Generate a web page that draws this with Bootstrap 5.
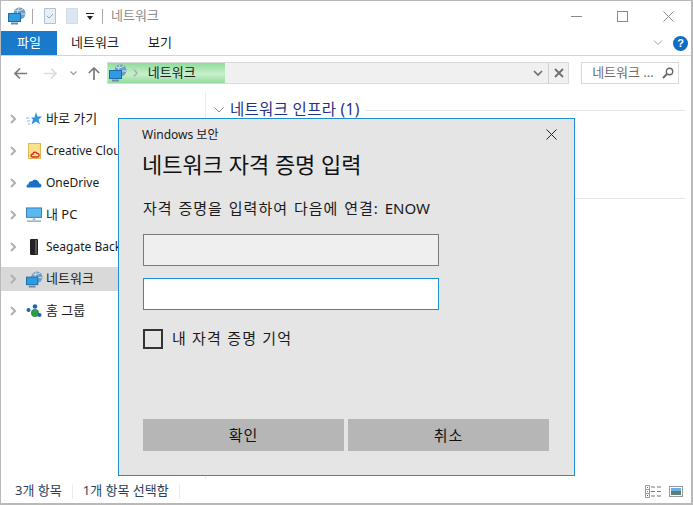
<!DOCTYPE html>
<html lang="ko">
<head>
    <meta charset="UTF-8">
    <meta name="viewport" content="width=device-width, initial-scale=1.0">
    <title>네트워크</title>
    <link href="https://cdn.jsdelivr.net/npm/bootstrap@5.3.0/dist/css/bootstrap.min.css" rel="stylesheet">
    <style>
        html, body { height: 505px; overflow: hidden; }
        body { font-family: "Noto Sans", "Noto Sans CJK KR", sans-serif; font-size: 13px; color: #1a1a1a; background: #fff; }
        .lat { font-size: 12px; }
        .explorer { width: 693px; height: 505px; border: 1px solid #b9b9b9; border-bottom-width: 2px; border-right-width: 2px; position: relative; }
        .title-row { height: 30px; padding-left: 7px; }
        .title-text { color: #8c8c8c; margin-left: 8px; margin-bottom: 2px; line-height: 1; }
        .vsep { width: 1px; height: 15px; background: #a8a8a8; }
        .qa-sep1 { margin-left: 6px; }
        .qa-doc1 { margin-left: 11px; }
        .qa-doc2 { margin-left: 10px; }
        .qa-drop { margin-left: 8px; }
        .qa-sep2 { margin-left: 8px; }
        .win-btns { margin-left: auto; }
        .win-btn { width: 46px; height: 30px; display: flex; align-items: center; justify-content: center; }
        .tab-row { height: 25px; border-bottom: 1px solid #d4d4d4; }
        .ftab { height: 24px; display: flex; align-items: center; justify-content: center; }
        .ftab-file { width: 56px; background: #1979ca; color: #fff; }
        .ftab-net { width: 76px; }
        .ftab-view { width: 54px; }
        .tab-tools { margin-left: auto; padding-right: 3px; gap: 10px; }
        .help-dot { width: 15px; height: 15px; border-radius: 50%; background: #0f6dc4; color: #fff; font-size: 11px; font-weight: 700; line-height: 15px; text-align: center; font-family: "Liberation Sans", sans-serif; }
        .addr-row { height: 35px; padding: 6px 12px 0 11px; }
        .nav-arrows { width: 95px; }
        .nav-slot { height: 22px; display: flex; align-items: center; justify-content: center; }
        .nav-back { width: 16px; }
        .nav-fwd { width: 16px; margin-left: 14px; }
        .nav-drop { width: 12px; margin-left: 9px; }
        .nav-up { width: 16px; margin-left: 7px; }
        .addr-box { width: 463px; height: 22px; background: #f0f0f0; border: 1px solid #d9d9d9; position: relative; }
        .addr-fill { width: 117px; height: 20px; background: linear-gradient(180deg, #8fdb9a 0%, #c8efcd 55%, #93dca0 100%); gap: 6px; padding-left: 1px; }
        .addr-label { margin-left: 4px; }
        .addr-end { margin-left: auto; }
        .addr-btn { width: 20px; height: 20px; display: flex; align-items: center; justify-content: center; }
        .addr-x { border-left: 1px solid #d0d0d0; }
        .search-field { width: 98px; height: 22px; margin-left: 12px; border: 1px solid #d9d9d9; color: #6d6d6d; padding: 0 4px 0 10px; white-space: nowrap; }
        .body-row { height: 388px; }
        .side-pane { width: 205px; padding-top: 16px; gap: 8px; border-right: 1px solid #ececec; }
        .side-item { height: 24px; padding-left: 9px; white-space: nowrap; }
        .side-item.is-active { background: #d9d9d9; }
        .side-icon { width: 24px; height: 20px; margin-left: 6px; display: flex; align-items: center; justify-content: center; }
        .main-pane { flex: 1; padding: 9px 6px 0 8px; }
        .sect-head { font-size: 15px; line-height: 18px; gap: 6px; white-space: nowrap; }
        .sect-name { color: #1e3287; font-size: 15.5px; letter-spacing: .3px; margin-bottom: 2px; }
        .sect-line { flex: 1; height: 1px; background: #e3e3e3; }
        .sect-rule { height: 1px; background: #e3e3e3; margin-top: 78px; }
        .status-row { height: 24px; padding-left: 14px; padding-right: 8px; gap: 10px; color: #2d3f57; }
        .status-sep { width: 1px; height: 15px; background: #ececec; }
        .status-icons { margin-left: auto; gap: 7px; }
        .cred-dialog { position: absolute; left: 117px; top: 117px; width: 457px; height: 358px; background: #e5e5e5; border: 1px solid #1f8fd0; padding: 0 23px; }
        .cred-close { position: absolute; right: 17px; top: 10px; line-height: 0; }
        .cred-app { padding-top: 8px; line-height: 16px; font-size: 12px; }
        .cred-title { font-size: 22px; line-height: 28px; font-weight: 400; margin: 7px 0 0; color: #111; }
        .cred-msg { font-size: 15px; line-height: 20px; letter-spacing: 1px; word-spacing: 1px; margin: 20px 0 0 1px; }
        .cred-msg-host { letter-spacing: 0; font-size: 15px; }
        .cred-input { width: 296px; height: 32px; margin-left: 1px; border-radius: 0; padding: 0 6px; }
        .cred-input.is-off { background: #efefef; border: 1px solid #7a7a7a; margin-top: 16px; }
        .cred-input.is-on { background: #fff; border: 1px solid #1f8fd0; margin-top: 12px; box-shadow: none; }
        .cred-check { margin: 18px 0 0 1px; gap: 9px; font-size: 15px; line-height: 20px; letter-spacing: 1.2px; }
        .cred-label { margin-bottom: 2px; }
        .cred-box { width: 20px; height: 20px; border: 2px solid #333; }
        .cred-actions { position: absolute; left: 24px; top: 300px; gap: 4px; }
        .cred-btn { width: 201px; height: 32px; background: #b6b6b6; border: 0; border-radius: 0; font-size: 15px; letter-spacing: 1px; color: #111; padding: 0; }
    </style>
</head>
<body>
    <svg width="0" height="0" class="position-absolute">
        <defs>
            <symbol id="ico-net" viewBox="0 0 18 18">
                <circle cx="11.5" cy="6.5" r="6" fill="#6f9fc4"/>
                <path d="M7 3c2 1 5 1 8-1M6 7h11M11 1c-2 3-2 7 0 11" stroke="#d5e6f2" stroke-width="1" fill="none"/>
                <rect x="0.5" y="6.5" width="12" height="8" fill="#2f9be0" stroke="#1a6da8"/>
                <path d="M3 16.5h7" stroke="#6e8aa0" stroke-width="2"/>
            </symbol>
            <symbol id="ico-chev" viewBox="0 0 6 10">
                <path d="M1 1l4 4-4 4" fill="none" stroke="#b0b0b0" stroke-width="2"/>
            </symbol>
        </defs>
    </svg>

    <div class="explorer d-flex flex-column">
        <!-- 제목 표시줄 -->
        <div class="title-row d-flex align-items-center">
            <svg width="18" height="18"><use href="#ico-net"/></svg>
            <span class="vsep qa-sep1"></span>
            <svg width="12" height="16" class="qa-doc1" viewBox="0 0 12 16"><path d="M.5.5h11v15H.5z" fill="#e9eef6" stroke="#b4c0d4"/><path d="M3 8l2 2 4-4" fill="none" stroke="#9aa4b4"/></svg>
            <svg width="12" height="16" class="qa-doc2" viewBox="0 0 12 16"><path d="M.5.5h11v15H.5z" fill="#dfe6f3" stroke="#d3dbe9"/></svg>
            <svg width="8" height="7" viewBox="0 0 8 7" class="qa-drop"><path d="M0 0h8v1H0zM1 3h6L4 7z" fill="#222"/></svg>
            <span class="vsep qa-sep2"></span>
            <span class="title-text">네트워크</span>
            <div class="win-btns d-flex">
                <div class="win-btn"><svg width="11" height="11"><path d="M0 5.5h11" stroke="#8a8a8a"/></svg></div>
                <div class="win-btn"><svg width="11" height="11"><rect x=".5" y=".5" width="10" height="10" fill="none" stroke="#8a8a8a"/></svg></div>
                <div class="win-btn"><svg width="11" height="11"><path d="M.5.5l10 10M10.5.5l-10 10" stroke="#8a8a8a"/></svg></div>
            </div>
        </div>

        <!-- 리본 탭 -->
        <div class="tab-row d-flex">
            <div class="ftab ftab-file">파일</div>
            <div class="ftab ftab-net">네트워크</div>
            <div class="ftab ftab-view">보기</div>
            <div class="tab-tools d-flex align-items-center">
                <svg width="10" height="6" viewBox="0 0 10 6"><path d="M1 .5l4 4 4-4" fill="none" stroke="#a0a0a0"/></svg>
                <div class="help-dot">?</div>
            </div>
        </div>

        <!-- 주소 표시줄 -->
        <div class="addr-row d-flex align-items-start">
            <div class="nav-arrows d-flex">
                <div class="nav-slot nav-back"><svg width="13" height="11" viewBox="0 0 13 11"><path d="M6 .5l-5 5 5 5M1 5.5h12" fill="none" stroke="#7a7a7a" stroke-width="1.6"/></svg></div>
                <div class="nav-slot nav-fwd"><svg width="13" height="11" viewBox="0 0 13 11"><path d="M7 .5l5 5-5 5M12 5.5H0" fill="none" stroke="#dcdcdc" stroke-width="1.6"/></svg></div>
                <div class="nav-slot nav-drop"><svg width="7" height="5" viewBox="0 0 7 5"><path d="M.5.5l3 3 3-3" fill="none" stroke="#9a9a9a" stroke-width="1.2"/></svg></div>
                <div class="nav-slot nav-up"><svg width="12" height="13" viewBox="0 0 12 13"><path d="M.8 6L6 1l5.2 5M6 1v12" fill="none" stroke="#7a7a7a" stroke-width="1.7"/></svg></div>
            </div>
            <div class="addr-box d-flex align-items-center">
                <div class="addr-fill d-flex align-items-center">
                    <svg width="18" height="18"><use href="#ico-net"/></svg>
                    <svg width="5" height="8"><use href="#ico-chev"/></svg>
                    <span class="addr-label">네트워크</span>
                </div>
                <div class="addr-end d-flex align-items-center">
                    <div class="addr-btn"><svg width="10" height="7" viewBox="0 0 10 7"><path d="M1 1l4 4 4-4" fill="none" stroke="#6e6e6e" stroke-width="1.7"/></svg></div>
                    <div class="addr-btn addr-x"><svg width="10" height="10"><path d="M1 1l8 8M9 1l-8 8" stroke="#6e6e6e" stroke-width="1.8"/></svg></div>
                </div>
            </div>
            <div class="search-field d-flex align-items-center justify-content-between">
                <span>네트워크 ...</span>
                <svg width="12" height="12" viewBox="0 0 12 12"><circle cx="7.5" cy="4.5" r="3.2" fill="none" stroke="#666" stroke-width="1.4"/><path d="M5 7l-4 4" stroke="#666" stroke-width="1.8"/></svg>
            </div>
        </div>

        <div class="body-row d-flex">
            <!-- 탐색 창 -->
            <div class="side-pane d-flex flex-column">
                <div class="side-item d-flex align-items-center"><svg width="6" height="10"><use href="#ico-chev"/></svg><span class="side-icon"><svg width="16" height="14" viewBox="0 0 16 14"><path d="M10 0l1.5 4.500H16l-3.500 3 1.500 5-4-3-4.500 3 1.500-5-2-2h3.500z" fill="#2f93e6"/><path d="M0 6h3.500M1 9h3M2 12h2" stroke="#7dbcee"/></svg></span>바로 가기</div>
                <div class="side-item d-flex align-items-center"><svg width="6" height="10"><use href="#ico-chev"/></svg><span class="side-icon"><svg width="13" height="16" viewBox="0 0 13 16"><rect x=".5" y=".5" width="12" height="15" fill="#fbe08f" stroke="#e0b84f"/><path d="M4 14h6c2-1 1-4-1-3.500-1-2-4-1.500-4 .5-2 0-3 2-1 3z" fill="none" stroke="#d8262c" stroke-width="1.3"/></svg></span><span class="lat">Creative Cloud Files</span></div>
                <div class="side-item d-flex align-items-center"><svg width="6" height="10"><use href="#ico-chev"/></svg><span class="side-icon"><svg width="16" height="10" viewBox="0 0 18 11"><path d="M1 10.500h15c2-1 2-4-1-4.500C14 2 9 .5 7 3.500 4 3 2.500 5 3 7c-2 0-3 2-2 3.500z" fill="#1a70c8"/></svg></span><span class="lat">OneDrive</span></div>
                <div class="side-item d-flex align-items-center"><svg width="6" height="10"><use href="#ico-chev"/></svg><span class="side-icon"><svg width="16" height="16" viewBox="0 0 17 16"><rect x=".5" y=".5" width="16" height="10" fill="#5cb8f0" stroke="#2f7fb8"/><path d="M7 11.500h3v2H7z" fill="#a9bccb"/><path d="M1 14.500h15" stroke="#8aa0b2" stroke-width="1.4"/></svg></span>내 PC</div>
                <div class="side-item d-flex align-items-center"><svg width="6" height="10"><use href="#ico-chev"/></svg><span class="side-icon"><svg width="8" height="16" viewBox="0 0 8 16"><rect width="8" height="16" rx="1" fill="#222"/><path d="M5 1h2v14H5z" fill="#555"/></svg></span><span class="lat">Seagate Backup Plus</span></div>
                <div class="side-item is-active d-flex align-items-center"><svg width="6" height="10"><use href="#ico-chev"/></svg><span class="side-icon"><svg width="17" height="17"><use href="#ico-net"/></svg></span>네트워크</div>
                <div class="side-item d-flex align-items-center"><svg width="6" height="10"><use href="#ico-chev"/></svg><span class="side-icon"><svg width="16" height="14" viewBox="0 0 16 14"><circle cx="2.5" cy="6" r="2" fill="#1f67b0"/><circle cx="9" cy="2.5" r="2.3" fill="#1f67b0"/><circle cx="9" cy="9" r="4" fill="#2f9a4a"/><circle cx="13.5" cy="11" r="2" fill="#1f67b0"/></svg></span>홈 그룹</div>
            </div>

            <!-- 내용 창 -->
            <div class="main-pane">
                <div class="sect-head d-flex align-items-center">
                    <svg width="10" height="6" viewBox="0 0 10 6"><path d="M.5.500L5 5 9.500.500" fill="none" stroke="#8a8a8a"/></svg>
                    <span class="sect-name">네트워크 인프라 (1)</span>
                    <span class="sect-line"></span>
                </div>
                <div class="sect-rule"></div>
            </div>
        </div>

        <!-- 상태 표시줄 -->
        <div class="status-row d-flex align-items-center">
            <span>3개 항목</span>
            <span class="status-sep"></span>
            <span>1개 항목 선택함</span>
            <span class="status-sep"></span>
            <div class="status-icons d-flex align-items-center">
                <svg width="17" height="13" viewBox="0 0 17 13"><path d="M.5.500h4v12h-4zM.5 4.500h4M.5 8.500h4" fill="none" stroke="#9a9a9a"/><path d="M6 2h4M12 2h4M6 6.500h4M12 6.500h4M6 11h4M12 11h4" stroke="#777"/><path d="M2 2h1v1H2z" fill="#777"/><path d="M2 6h1v1H2z" fill="#3a9ad8"/><path d="M2 10h1v1H2z" fill="#c8323c"/></svg>
                <svg width="14" height="11" viewBox="0 0 14 11"><rect x=".5" y=".5" width="13" height="10" fill="#fff" stroke="#9a9a9a"/><path d="M2 2h10v3H2z" fill="#68b0e8"/><path d="M2 5h10v4H2z" fill="#5b7f78"/></svg>
            </div>
        </div>

        <!-- 자격 증명 대화 상자 -->
        <div class="cred-dialog">
            <div class="cred-close"><svg width="11" height="11"><path d="M.5.5l10 10M10.500.5l-10 10" stroke="#222"/></svg></div>
            <div class="cred-app">Windows 보안</div>
            <h1 class="cred-title">네트워크 자격 증명 입력</h1>
            <p class="cred-msg">자격 증명을 입력하여 다음에 연결: <span class="cred-msg-host">ENOW</span></p>
            <input type="text" class="form-control cred-input is-off" disabled>
            <input type="password" class="form-control cred-input is-on">
            <div class="cred-check d-flex align-items-center">
                <span class="cred-box"></span>
                <span class="cred-label">내 자격 증명 기억</span>
            </div>
            <div class="cred-actions d-flex">
                <button type="button" class="btn cred-btn">확인</button>
                <button type="button" class="btn cred-btn">취소</button>
            </div>
        </div>
    </div>

    <script src="https://cdn.jsdelivr.net/npm/bootstrap@5.3.0/dist/js/bootstrap.bundle.min.js"></script>
</body>
</html>
